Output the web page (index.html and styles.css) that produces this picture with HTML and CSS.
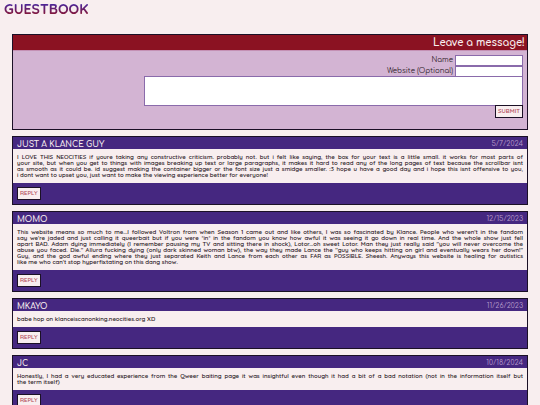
FILE: index.html
```html
<!DOCTYPE html>
<html lang="en">
<head>
<meta charset="utf-8">
<title>Guestbook</title>
<link rel="stylesheet" href="styles.css">
</head>
<body>
<h1 class="page-title">GUESTBOOK</h1>
<main class="guestbook">
  <form class="card form">
    <h2 class="form-title">Leave a message!</h2>
    <div class="form-body">
      <div class="field"><label for="name">Name</label><input id="name" type="text"></div>
      <div class="field"><label for="website">Website (Optional)</label><input id="website" type="text"></div>
      <textarea class="message" aria-label="Message"></textarea>
      <button class="button" type="submit">SUBMIT</button>
    </div>
  </form>

  <article class="card">
    <header class="post-head"><h2>JUST A KLANCE GUY</h2><time>5/7/2024</time></header>
    <p class="post-body">
      <span class="line">I LOVE THIS NEOCITIES if youre taking any constructive criticism. probably not. but i felt like saying, the box for your text is a little small. it works for most parts of</span>
      <span class="line">your site, but when you get to things with images breaking up text or large paragraphs, it makes it hard to read any of the long pages of text because the scrollbar isnt</span>
      <span class="line">as smooth as it could be. id suggest making the container bigger or the font size just a smidge smaller. :3 hope u have a good day and i hope this isnt offensive to you,</span>
      <span class="line">i dont want to upset you, just want to make the viewing experience better for everyone!</span>
    </p>
    <footer class="post-foot"><button class="button" type="button">REPLY</button></footer>
  </article>

  <article class="card">
    <header class="post-head"><h2>MOMO</h2><time>12/15/2023</time></header>
    <p class="post-body">
      <span class="line">This website means so much to me...I followed Voltron from when Season 1 came out and like others, I was so fascinated by Klance. People who weren't in the fandom</span>
      <span class="line">say we're jaded and just calling it queerbait but if you were *in* in the fandom you know how awful it was seeing it go down in real time. And the whole show just fell</span>
      <span class="line">apart BAD. Adam dying immediately (I remember pausing my TV and sitting there in shock), Lotor...oh sweet Lotor. Man they just really said "you will never overcome the</span>
      <span class="line">abuse you faced. Die." Allura fucking dying (only dark skinned woman btw), the way they made Lance the "guy who keeps hitting on girl and eventually wears her down!"</span>
      <span class="line">Guy, and the god awful ending where they just separated Keith and Lance from each other as FAR as POSSIBLE. Sheesh. Anyways this website is healing for autistics</span>
      <span class="line">like me who can't stop hyperfixtating on this dang show.</span>
    </p>
    <footer class="post-foot"><button class="button" type="button">REPLY</button></footer>
  </article>

  <article class="card">
    <header class="post-head"><h2>MKAYO</h2><time>11/26/2023</time></header>
    <p class="post-body">
      <span class="line">babe hop on klanceiscanonking.neocities.org XD</span>
    </p>
    <footer class="post-foot"><button class="button" type="button">REPLY</button></footer>
  </article>

  <article class="card">
    <header class="post-head"><h2>JC</h2><time>10/18/2024</time></header>
    <p class="post-body">
      <span class="line">Honestly, I had a very educated experience from the Qweer baiting page it was insightful even though it had a bit of a bad notation (not in the information itself but</span>
      <span class="line">the term itself)</span>
    </p>
    <footer class="post-foot"><button class="button" type="button">REPLY</button></footer>
  </article>
</main>
</body>
</html>
```

FILE: styles.css
```css
* { box-sizing: border-box; }

html { overflow: hidden; background: #f8eeef; }

body {
  margin: 0;
  color: #2b2026;
  font-family: Comfortaa, Quicksand, "Liberation Sans", sans-serif;
}

h1, h2, p { margin: 0; font-weight: 400; }

.page-title {
  width: fit-content;
  margin-left: 4px;
  padding-top: 1px;
  font-family: Quicksand, Comfortaa, sans-serif;
  font-size: 14px;
  line-height: 17px;
  font-weight: 700;
  color: transparent;
  background: linear-gradient(#4d2495 25%, #8b1630 85%);
  background-clip: text;
}

.guestbook {
  display: flex;
  flex-direction: column;
  gap: 6px;
  margin: 16px 12px 0;
}

.card { border: 1px solid #1b1026; background: #f8eeef; }

.form { background: #d3b4d3; }

.form-title {
  padding: 0 2px;
  background: #8b1222;
  color: #f8eeef;
  font-size: 10px;
  line-height: 15px;
  font-weight: 700;
  text-align: right;
}

.form-body {
  display: flex;
  flex-direction: column;
  align-items: flex-end;
  padding: 4px 4px 11px;
  border-top: 1px solid #c490b4;
}

.field {
  display: flex;
  align-items: center;
  gap: 2px;
  font-size: 7px;
  line-height: 11px;
}

.field input {
  width: 68px;
  height: 11px;
  padding: 0 2px;
  border: 1px solid #8a6bab;
  background: #fff;
  font: inherit;
}

.message {
  display: block;
  width: 75%;
  height: 30px;
  margin-top: -1px;
  padding: 2px;
  border: 1px solid #8a6bab;
  background: #fff;
  font: inherit;
  font-size: 7px;
  resize: none;
}

.button {
  display: block;
  height: 13px;
  padding: 0 2px;
  border: 1px solid #1b1026;
  background: #f8eeef;
  color: #b04a5a;
  font-family: Quicksand, Comfortaa, sans-serif;
  font-size: 6px;
  font-weight: 600;
  line-height: 11px;
}

.form .button { margin-top: -1px; }

.post-head {
  display: flex;
  justify-content: space-between;
  align-items: flex-end;
  padding: 3px 4px 0;
  background: #452780;
  color: #f8eeef;
  line-height: 9px;
}

.post-head h2 { font-size: 8px; font-weight: 600; }

.post-head time { color: #b79ccb; font-size: 7px; }

.post-body {
  padding: 5px 4px;
  font-family: Quicksand, Comfortaa, sans-serif;
  font-size: 6px;
  font-weight: 600;
  line-height: 6px;
}

.line { display: block; white-space: nowrap; text-align-last: justify; }

.line:last-child { text-align-last: left; }

.post-foot { padding: 4px; background: #452780; }
```
